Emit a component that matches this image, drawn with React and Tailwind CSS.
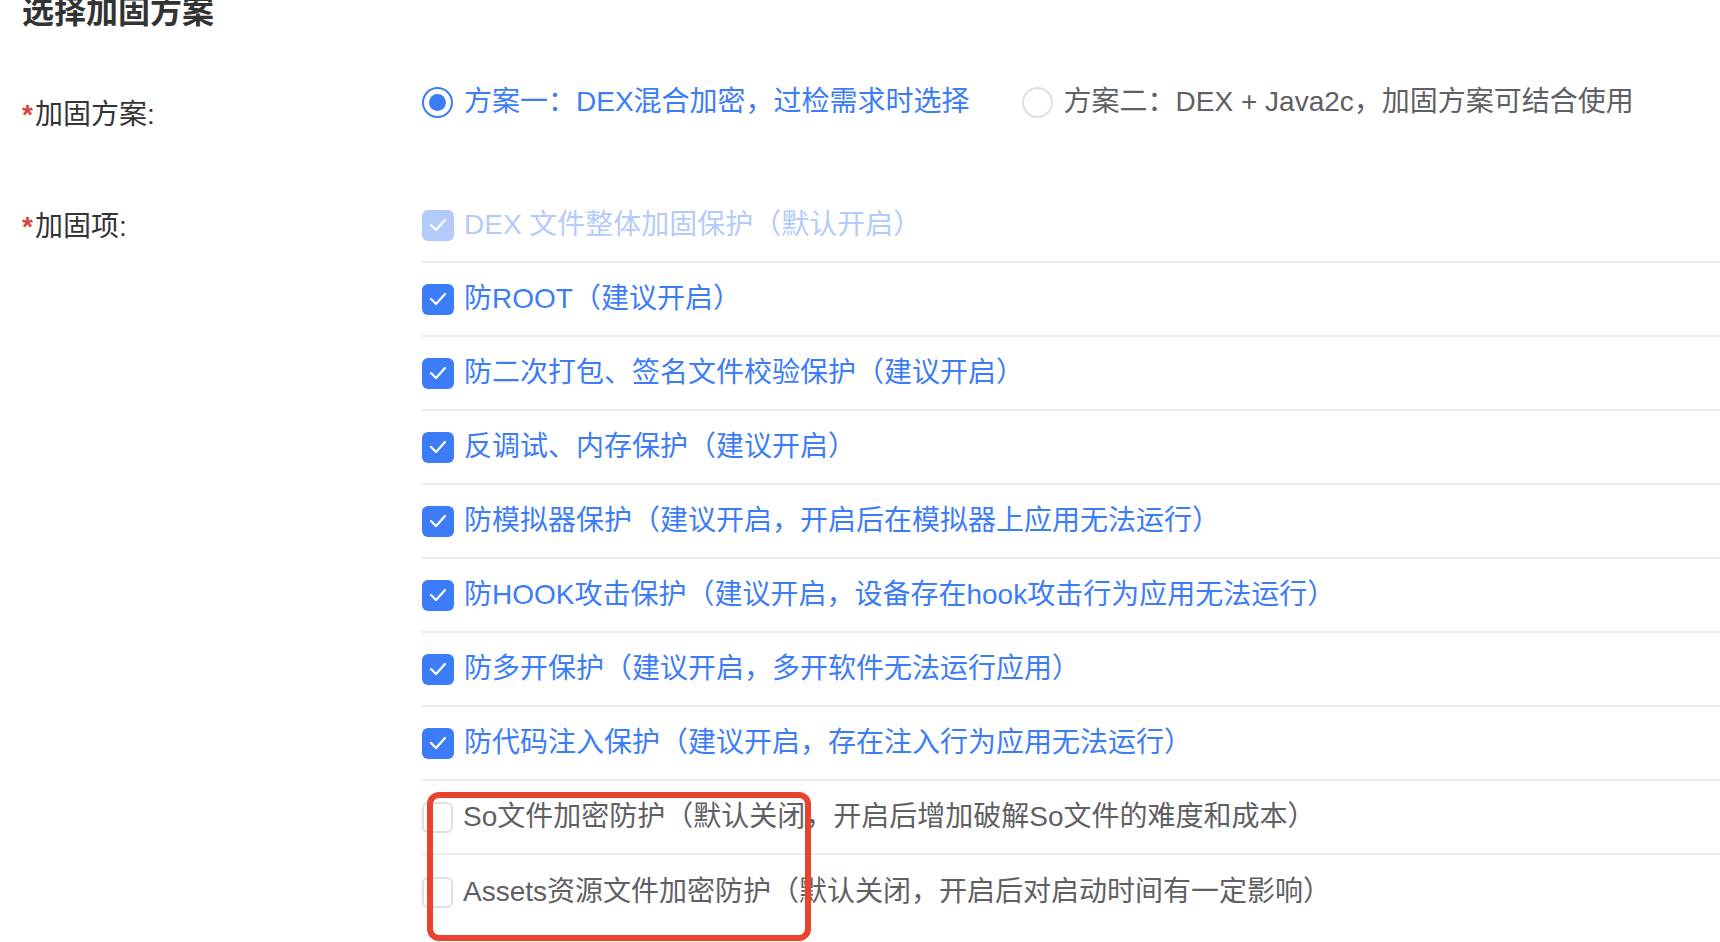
import React, { useState } from "react";

const FONT = "font-['Liberation_Sans','Noto_Sans_CJK_SC',sans-serif]";

const ITEMS = [
  { label: "DEX 文件整体加固保护（默认开启）", checked: true, disabled: true },
  { label: "防ROOT（建议开启）", checked: true },
  { label: "防二次打包、签名文件校验保护（建议开启）", checked: true },
  { label: "反调试、内存保护（建议开启）", checked: true },
  { label: "防模拟器保护（建议开启，开启后在模拟器上应用无法运行）", checked: true },
  { label: "防HOOK攻击保护（建议开启，设备存在hook攻击行为应用无法运行）", checked: true },
  { label: "防多开保护（建议开启，多开软件无法运行应用）", checked: true },
  { label: "防代码注入保护（建议开启，存在注入行为应用无法运行）", checked: true },
  { label: "So文件加密防护（默认关闭，开启后增加破解So文件的难度和成本）", checked: false },
  { label: "Assets资源文件加密防护（默认关闭，开启后对启动时间有一定影响）", checked: false },
];

function CheckBox({ checked, disabled }) {
  if (!checked) {
    return <span className="w-[31px] h-[31px] rounded-[6px] border-2 border-[#dcdfe6] bg-white shrink-0" />;
  }
  return (
    <span
      className={`w-[32px] h-[31px] rounded-[6px] shrink-0 flex items-center justify-center ${
        disabled ? "bg-[#b3cbfa]" : "bg-[#3c7cf6]"
      }`}
    >
      <svg width="18" height="14" viewBox="0 0 18 14" fill="none">
        <polyline points="2,7 7,12 16,2" stroke="white" strokeWidth="2.2" strokeLinecap="round" strokeLinejoin="round" />
      </svg>
    </span>
  );
}

function Radio({ checked, label, onClick }) {
  return (
    <button type="button" onClick={onClick} className="flex items-center gap-[11px]">
      {checked ? (
        <span className="w-[31px] h-[31px] rounded-full border-2 border-[#3c7cf6] flex items-center justify-center">
          <span className="w-[17px] h-[17px] rounded-full bg-[#3c7cf6]" />
        </span>
      ) : (
        <span className="w-[31px] h-[31px] rounded-full border-2 border-[#dcdfe6]" />
      )}
      <span className={`text-[28px] leading-[44px] ${checked ? "text-[#3c7cf6]" : "text-[#5f6064]"}`}>{label}</span>
    </button>
  );
}

export default function App() {
  const [plan, setPlan] = useState(1);
  const [items, setItems] = useState(ITEMS);

  const toggle = (i) => {
    if (items[i].disabled) return;
    setItems(items.map((it, idx) => (idx === i ? { ...it, checked: !it.checked } : it)));
  };

  return (
    <main className={`relative min-h-screen bg-white overflow-hidden ${FONT}`}>
      <h1 className="pl-[22px] text-[32px] leading-[32px] font-bold text-[#333] mt-[-4px]">选择加固方案</h1>

      {/* 加固方案 */}
      <div className="grid grid-cols-[400px_1fr] pl-[22px] mt-[48px]">
        <div className="text-[28px] leading-[44px] text-[#333] mt-[17px]">
          <span className="text-[#d9473b] font-bold mr-[2px]">*</span>加固方案:
        </div>
        <div className="flex items-center gap-[52px] self-start mt-[4px]">
          <Radio checked={plan === 1} label="方案一：DEX混合加密，过检需求时选择" onClick={() => setPlan(1)} />
          <Radio checked={plan === 2} label="方案二：DEX + Java2c，加固方案可结合使用" onClick={() => setPlan(2)} />
        </div>
      </div>

      {/* 加固项 */}
      <div className="grid grid-cols-[400px_1fr] pl-[22px] mt-[52px]">
        <div className="text-[28px] leading-[44px] text-[#333] mt-[16px]">
          <span className="text-[#d9473b] font-bold mr-[2px]">*</span>加固项:
        </div>
        <div className="flex flex-col">
          {items.map((it, i) => (
            <label
              key={i}
              onClick={() => toggle(i)}
              className={`flex items-center gap-[10px] h-[74px] cursor-pointer ${
                i < items.length - 1 ? "border-b-2 border-[#ececec]" : ""
              }`}
            >
              <CheckBox checked={it.checked} disabled={it.disabled} />
              <span
                className={`text-[28px] leading-[44px] whitespace-nowrap ${
                  it.disabled ? "text-[#b3cbfa]" : it.checked ? "text-[#3c7cf6]" : "text-[#5f6064]"
                }`}
              >
                {it.label}
              </span>
            </label>
          ))}
        </div>
      </div>

      {/* annotation */}
      <div className="absolute left-[427px] top-[792px] w-[384px] h-[149px] border-[6px] border-[#e8432d] rounded-[12px] pointer-events-none" />
    </main>
  );
}
